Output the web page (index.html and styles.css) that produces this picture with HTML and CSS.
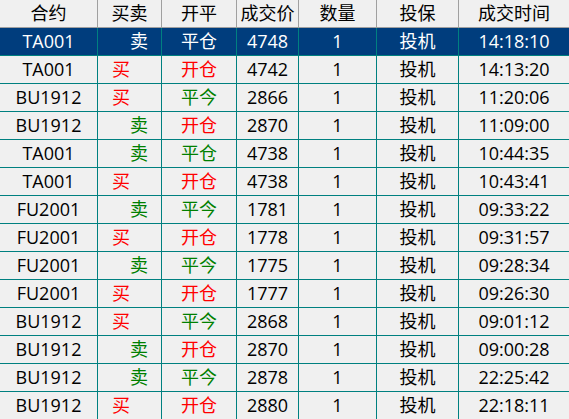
FILE: index.html
```html
<!DOCTYPE html>
<html lang="zh-CN">
<head>
<meta charset="utf-8">
<title>成交</title>
<link rel="stylesheet" href="styles.css">
</head>
<body>
<div class="grid">
  <div class="row head">
    <div class="c">合约</div><div class="c">买卖</div><div class="c">开平</div><div class="c">成交价</div><div class="c">数量</div><div class="c">投保</div><div class="c">成交时间</div>
  </div>
  <div class="row sel">
    <div class="c">TA001</div><div class="c sell">卖</div><div class="c">平仓</div><div class="c">4748</div><div class="c">1</div><div class="c">投机</div><div class="c">14:18:10</div>
  </div>
  <div class="row">
    <div class="c">TA001</div><div class="c buy red">买</div><div class="c red">开仓</div><div class="c">4742</div><div class="c">1</div><div class="c">投机</div><div class="c">14:13:20</div>
  </div>
  <div class="row">
    <div class="c">BU1912</div><div class="c buy red">买</div><div class="c green">平今</div><div class="c">2866</div><div class="c">1</div><div class="c">投机</div><div class="c">11:20:06</div>
  </div>
  <div class="row">
    <div class="c">BU1912</div><div class="c sell green">卖</div><div class="c red">开仓</div><div class="c">2870</div><div class="c">1</div><div class="c">投机</div><div class="c">11:09:00</div>
  </div>
  <div class="row">
    <div class="c">TA001</div><div class="c sell green">卖</div><div class="c green">平仓</div><div class="c">4738</div><div class="c">1</div><div class="c">投机</div><div class="c">10:44:35</div>
  </div>
  <div class="row">
    <div class="c">TA001</div><div class="c buy red">买</div><div class="c red">开仓</div><div class="c">4738</div><div class="c">1</div><div class="c">投机</div><div class="c">10:43:41</div>
  </div>
  <div class="row">
    <div class="c">FU2001</div><div class="c sell green">卖</div><div class="c green">平今</div><div class="c">1781</div><div class="c">1</div><div class="c">投机</div><div class="c">09:33:22</div>
  </div>
  <div class="row">
    <div class="c">FU2001</div><div class="c buy red">买</div><div class="c red">开仓</div><div class="c">1778</div><div class="c">1</div><div class="c">投机</div><div class="c">09:31:57</div>
  </div>
  <div class="row">
    <div class="c">FU2001</div><div class="c sell green">卖</div><div class="c green">平今</div><div class="c">1775</div><div class="c">1</div><div class="c">投机</div><div class="c">09:28:34</div>
  </div>
  <div class="row">
    <div class="c">FU2001</div><div class="c buy red">买</div><div class="c red">开仓</div><div class="c">1777</div><div class="c">1</div><div class="c">投机</div><div class="c">09:26:30</div>
  </div>
  <div class="row">
    <div class="c">BU1912</div><div class="c buy red">买</div><div class="c green">平今</div><div class="c">2868</div><div class="c">1</div><div class="c">投机</div><div class="c">09:01:12</div>
  </div>
  <div class="row">
    <div class="c">BU1912</div><div class="c sell green">卖</div><div class="c red">开仓</div><div class="c">2870</div><div class="c">1</div><div class="c">投机</div><div class="c">09:00:28</div>
  </div>
  <div class="row">
    <div class="c">BU1912</div><div class="c sell green">卖</div><div class="c green">平今</div><div class="c">2878</div><div class="c">1</div><div class="c">投机</div><div class="c">22:25:42</div>
  </div>
  <div class="row">
    <div class="c">BU1912</div><div class="c buy red">买</div><div class="c red">开仓</div><div class="c">2880</div><div class="c">1</div><div class="c">投机</div><div class="c">22:18:11</div>
  </div>
</div>
</body>
</html>
```
FILE: styles.css
```css
html, body {
  margin: 0;
  padding: 0;
  background: #f0f0f0;
}
body {
  font-family: "Open Sans", "Noto Sans CJK SC", sans-serif;
  font-size: 18px;
  color: #000;
  overflow: hidden;
}
.grid {
  width: 569px;
}
.row {
  display: grid;
  grid-template-columns: 98px 64px 75px 62px 78px 82px 110px;
  height: 28px;
  box-sizing: border-box;
  border-bottom: 1px solid #008080;
}
.c {
  box-sizing: border-box;
  border-right: 1px solid #008080;
  display: flex;
  align-items: center;
  justify-content: center;
  line-height: 27px;
  white-space: nowrap;
}
.c:last-child {
  border-right: none;
}
.head {
  border-bottom: 1px solid #a0a0a0;
}
.head .c {
  border-right-color: #a0a0a0;
}
.sel {
  background: #003d7d;
  color: #fff;
}
.buy {
  justify-content: flex-start;
  padding-left: 14px;
}
.sell {
  justify-content: flex-end;
  padding-right: 13px;
}
.red {
  color: #ff0000;
}
.green {
  color: #008000;
}
```
